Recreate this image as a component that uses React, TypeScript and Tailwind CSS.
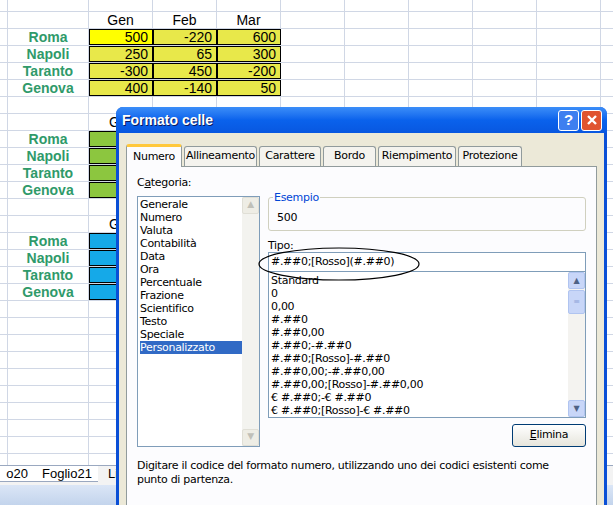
import React from "react";

const cols = [8, 81, 64, 64, 64, 64, 64, 64, 64, 64];
const names = ["Roma", "Napoli", "Taranto", "Genova"];
const data = [
  ["500", "-220", "600"],
  ["250", "65", "300"],
  ["-300", "450", "-200"],
  ["400", "-140", "50"],
];

function cellContent(r: number, c: number): { text?: string; cls: string } {
  if (r === 0 && c >= 2 && c <= 4) return { text: ["Gen", "Feb", "Mar"][c - 2], cls: "justify-center text-black" };
  if (r >= 1 && r <= 4) {
    if (c === 1) return { text: names[r - 1], cls: "justify-center font-bold text-[#2f9a6a]" };
    if (c >= 2 && c <= 4)
      return {
        text: data[r - 1][c - 2],
        cls: `justify-end pr-1 text-black border border-black ${r === 1 && c === 2 ? "bg-[#ffff00]" : "bg-[#e8e84a]"}`,
      };
  }
  if (r === 6 && c === 2) return { text: "G", cls: "justify-start pl-[20px] text-black" };
  if (r >= 7 && r <= 10) {
    if (c === 1) return { text: names[r - 7], cls: "justify-center font-bold text-[#2f9a6a]" };
    if (c === 2) return { cls: "bg-[#8cc63f] border border-black" };
  }
  if (r === 12 && c === 2) return { text: "G", cls: "justify-start pl-[20px] text-black" };
  if (r >= 13 && r <= 16) {
    if (c === 1) return { text: names[r - 13], cls: "justify-center font-bold text-[#2f9a6a]" };
    if (c === 2) return { cls: "bg-[#15a9e8] border border-black" };
  }
  return { cls: "" };
}

const catList = ["Generale","Numero","Valuta","Contabilità","Data","Ora","Percentuale","Frazione","Scientifico","Testo","Speciale","Personalizzato"];
const fmtList = ["Standard","0","0,00","#.##0","#.##0,00","#.##0;-#.##0","#.##0;[Rosso]-#.##0","#.##0,00;-#.##0,00","#.##0,00;[Rosso]-#.##0,00","€ #.##0;-€ #.##0","€ #.##0;[Rosso]-€ #.##0"];
const tabs: [string, number][] = [["Allineamento", 73], ["Carattere", 62], ["Bordo", 53], ["Riempimento", 78], ["Protezione", 64]];

export default function App() {
  const rows = Array.from({ length: 27 }, (_, i) => i);
  return (
    <div className="relative w-[613px] h-[505px] overflow-hidden bg-white" style={{ fontFamily: "'Liberation Sans', Arial, sans-serif" }}>
      <div className="h-[465px] overflow-hidden">
        <div className="flex h-[12px] border-b border-[#d0d7e5]">
          {cols.map((w, c) => (
            <div key={c} style={{ width: w }} className="shrink-0 border-r border-[#d0d7e5]" />
          ))}
        </div>
        {rows.map((r) => (
          <div key={r} className="flex h-[17px] border-b border-[#d0d7e5]">
            {cols.map((w, c) => {
              const cc = cellContent(r, c);
              return (
                <div key={c} style={{ width: w }} className={`shrink-0 flex items-center text-[14px] border-r border-[#d0d7e5] ${cc.cls}`}>
                  {cc.text}
                </div>
              );
            })}
          </div>
        ))}
      </div>
      <div className="h-[20px] bg-[#f3f3f3] border-t border-[#9aa8c0] flex items-start text-[13px]">
        <div className="w-[30px] border-b border-[#9aa8c0] bg-white h-[16px] flex items-center justify-end pr-[2px]">o20</div>
        <div className="w-[68px] border-b border-[#9aa8c0] bg-white h-[16px] flex items-center pl-[12px]">Foglio21</div>
        <div className="pl-[10px] h-[16px] flex items-center">Li</div>
      </div>
      <div className="h-[20px] bg-gradient-to-b from-[#dbe6f6] to-[#c3d4ec]" />

      {/* Dialog */}
      <div className="absolute left-[116px] top-[107px] w-[491px] h-[410px] bg-[#0a4fd6] rounded-t-[7px] p-[3px] pt-0 flex flex-col">
        <div className="h-[26px] flex items-center px-[3px] bg-gradient-to-b from-[#3c8ef8] via-[#0a62ec] to-[#0857e0] rounded-t-[7px] -mx-[3px]">
          <span className="text-white font-bold text-[14px] ml-[3px]" style={{ textShadow: "1px 1px #0a1a60" }}>Formato celle</span>
          <div className="ml-auto flex gap-[2px] mr-[2px]">
            <div className="w-[21px] h-[21px] rounded-[3px] border border-white bg-[#3d7ff0] text-white font-bold text-[15px] flex items-center justify-center">?</div>
            <div className="w-[21px] h-[21px] rounded-[3px] border border-white bg-[#e0542f] text-white flex items-center justify-center">
              <svg width="12" height="12" viewBox="0 0 12 12"><path d="M2 2L10 10M10 2L2 10" stroke="white" strokeWidth="2.4" /></svg>
            </div>
          </div>
        </div>
        <div className="flex-1 bg-[#ece9d8] px-[7px] pt-[10px] text-[11px] text-black tracking-[-0.3px]" style={{ fontFamily: "'DejaVu Sans', sans-serif" }}>
          <div className="flex items-end h-[23px] relative z-10">
            <div className="w-[56px] h-[23px] flex items-center justify-center bg-[#fcfcfe] border border-[#919b9c] border-b-0 border-t-[3px] border-t-[#ffc83c] rounded-t-[3px] -mb-px">Numero</div>
            {tabs.map(([t, w]) => (
              <div key={t} style={{ width: w }} className="h-[20px] flex items-center justify-center bg-[#f4f3ee] border border-[#919b9c] border-b-0 rounded-t-[3px] ml-[2px]">{t}</div>
            ))}
          </div>
          <div className="h-[340px] bg-[#fcfcfe] border border-[#919b9c] px-[10px] pt-[8px] relative">
            <div className="flex gap-[8px]">
              <div className="w-[123px] shrink-0">
                <div className="mb-[4px]">C<u>a</u>tegoria:</div>
                <div className="h-[251px] border border-[#7f9db9] bg-white flex">
                  <div className="flex-1 pl-[2px] pt-[1px] leading-[13px]">
                    {catList.map((c) => (
                      <div key={c} className={c === "Personalizzato" ? "bg-[#316ac5] text-white" : ""}>{c}</div>
                    ))}
                  </div>
                  <div className="w-[17px] bg-[#f3f3ef] flex flex-col justify-between">
                    <div className="h-[17px] bg-[#eeede5] border border-[#e0dfd6] rounded-[2px] text-[#c0c0b8] text-[9px] flex items-center justify-center">▲</div>
                    <div className="h-[17px] bg-[#eeede5] border border-[#e0dfd6] rounded-[2px] text-[#c0c0b8] text-[9px] flex items-center justify-center">▼</div>
                  </div>
                </div>
              </div>
              <div className="flex-1 pt-[22px]">
                <div className="relative h-[34px] border border-[#d0d0bf] rounded-[3px]">
                  <span className="absolute -top-[8px] left-[4px] bg-[#fcfcfe] px-[1px] text-[#0046d5]">Esempio</span>
                  <div className="pt-[12px] pl-[8px]">500</div>
                </div>
                <div className="mt-[8px] h-[13px] leading-[13px]">Tipo:</div>
                <div className="relative">
                  <div className="h-[20px] border border-[#7f9db9] bg-white flex items-center pl-[2px]">#.##0;[Rosso](#.##0)</div>
                  <svg className="absolute -left-[11px] -top-[6px]" width="164" height="38" viewBox="0 0 164 38">
                    <ellipse cx="82" cy="18" rx="80" ry="16" fill="none" stroke="black" strokeWidth="1.2" />
                  </svg>
                </div>
                <div className="h-[146px] border border-[#7f9db9] border-t-0 bg-white flex">
                  <div className="flex-1 pl-[2px] pt-[2px] leading-[13px]">
                    {fmtList.map((f) => <div key={f}>{f}</div>)}
                  </div>
                  <div className="w-[17px] bg-[#f4f3f0] flex flex-col">
                    <div className="h-[17px] bg-[#c8d6f8] border border-[#b0c4f0] rounded-[2px] text-[#4d6185] text-[8px] flex items-center justify-center">▲</div>
                    <div className="h-[24px] mt-[1px] bg-[#c8d6f8] border border-[#b0c4f0] rounded-[2px] flex items-center justify-center text-[#8ea5d8] text-[8px]">≡</div>
                    <div className="flex-1" />
                    <div className="h-[17px] bg-[#c8d6f8] border border-[#b0c4f0] rounded-[2px] text-[#4d6185] text-[8px] flex items-center justify-center">▼</div>
                  </div>
                </div>
                <div className="flex justify-end mt-[6px]">
                  <div className="w-[74px] h-[23px] border border-[#003c74] rounded-[3px] bg-gradient-to-b from-white to-[#e6e5dc] flex items-center justify-center"><u>E</u>limina</div>
                </div>
              </div>
            </div>
            <div className="mt-[12px] leading-[14px] pr-[20px]">Digitare il codice del formato numero, utilizzando uno dei codici esistenti come punto di partenza.</div>
          </div>
        </div>
      </div>
    </div>
  );
}
